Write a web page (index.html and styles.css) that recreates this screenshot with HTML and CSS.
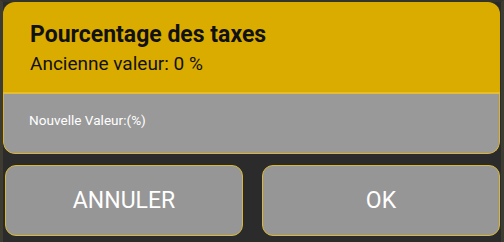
FILE: index.html
```html
<!DOCTYPE html>
<html>
<head>
<meta charset="utf-8">
<link rel="stylesheet" href="styles.css">
</head>
<body>
<div class="frame">
  <div class="dialog">
    <div class="header">
      <div class="title">Pourcentage des taxes</div>
      <div class="subtitle">Ancienne valeur: 0 %</div>
    </div>
    <div class="body">
      <div class="label">Nouvelle Valeur:(%)</div>
    </div>
  </div>
  <div class="buttons">
    <div class="btn">ANNULER</div>
    <div class="btn">OK</div>
  </div>
</div>
</body>
</html>
```
FILE: styles.css
```css
html, body {
  margin: 0;
  padding: 0;
  background: #2b2b2b;
  font-family: Roboto, "Liberation Sans", sans-serif;
}
.frame {
  width: 504px;
  height: 242px;
  box-sizing: border-box;
  border-left: 3px solid #3e3c30;
  border-right: 3px solid #3e3c30;
  border-top: 2px solid #35342c;
  padding: 0 1px 0 0;
  display: flex;
  flex-direction: column;
}
.dialog {
  display: flex;
  flex-direction: column;
  border-radius: 12px;
  overflow: hidden;
}
.header {
  background: #dbac00;
  height: 92px;
  box-sizing: border-box;
  padding: 20px 0 0 27px;
  border-bottom: 2px solid #e4bc30;
}
.title {
  font-size: 23px;
  font-weight: bold;
  color: #111;
  line-height: 26px;
}
.subtitle {
  font-size: 19px;
  color: #111;
  line-height: 22px;
  margin-top: 5px;
}
.body {
  background: #999999;
  height: 60px;
  box-sizing: border-box;
  border: 1.5px solid #dcb430;
  border-top: none;
  border-radius: 0 0 12px 12px;
  padding: 18px 0 0 25px;
}
.label {
  font-size: 13.6px;
  color: #fff;
  line-height: 16px;
}
.buttons {
  display: flex;
  gap: 19px;
  padding: 11px 0 0 2px;
}
.btn {
  flex: 1;
  height: 71px;
  box-sizing: border-box;
  background: #969696;
  border: 1.5px solid #d8b838;
  border-radius: 11px;
  color: #fff;
  font-size: 23px;
  display: flex;
  align-items: center;
  justify-content: center;
}
```
